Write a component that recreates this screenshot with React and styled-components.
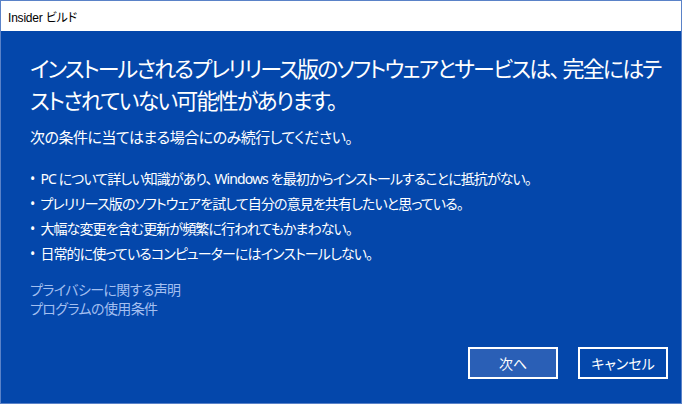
import React from "react";
import styled, { createGlobalStyle } from "styled-components";

const GlobalStyle = createGlobalStyle`
  html, body {
    margin: 0;
    padding: 0;
    background: #ffffff;
  }
  body {
    font-family: "Noto Sans", "Noto Sans CJK JP", sans-serif;
  }
`;

const Window = styled.div`
  width: 682px;
  height: 404px;
  box-sizing: border-box;
  border: 1px solid #5a82c8;
  display: flex;
  flex-direction: column;
  background: #0447ab;
  font-feature-settings: "palt";
`;

const TitleBar = styled.div`
  height: 30px;
  flex: none;
  background: #ffffff;
  color: #000000;
  font-family: "Liberation Sans", "Noto Sans CJK JP", sans-serif;
  font-size: 12px;
  letter-spacing: -0.2px;
  display: flex;
  align-items: center;
  padding-left: 7px;
`;

const Body = styled.div`
  flex: 1;
  display: flex;
  flex-direction: column;
  padding: 21px 13px 24px 29px;
  color: #ffffff;
`;

const Heading = styled.h1`
  margin: 0;
  font-size: 22px;
  font-weight: 400;
  line-height: 32px;
  letter-spacing: -1.85px;
`;

const Lead = styled.p`
  margin: 11px 0 0;
  font-size: 15px;
  line-height: 20px;
  letter-spacing: -0.5px;
`;

const BulletList = styled.ul`
  list-style: none;
  margin: 19px 0 0;
  padding: 0;
`;

const Bullet = styled.li`
  font-size: 14px;
  line-height: 25px;
  letter-spacing: -0.9px;
  &::before {
    content: "•";
    margin-right: 6px;
  }
`;

const Links = styled.div`
  margin-top: 14px;
  display: flex;
  flex-direction: column;
`;

const TextLink = styled.a`
  color: #a3bff0;
  font-size: 14px;
  line-height: 19px;
  letter-spacing: -0.6px;
  text-decoration: none;
  cursor: pointer;
`;

const Footer = styled.div`
  margin-top: auto;
  display: flex;
  justify-content: flex-end;
  gap: 20px;
`;

const Button = styled.button`
  width: 90px;
  height: 32px;
  box-sizing: border-box;
  border: 2px solid #ffffff;
  background: ${(p) => (p.primary ? "#2a5fb6" : "transparent")};
  color: #ffffff;
  font-family: inherit;
  font-size: 14px;
  font-feature-settings: "palt";
  cursor: pointer;
`;

const bullets = [
  "PC について詳しい知識があり、 Windows を最初からインストールすることに抵抗がない。",
  "プレリリース版のソフトウェアを試して自分の意見を共有したいと思っている。",
  "大幅な変更を含む更新が頻繁に行われてもかまわない。",
  "日常的に使っているコンピューターにはインストールしない。",
];

export default function App() {
  return (
    <>
      <GlobalStyle />
      <Window>
        <TitleBar>Insider ビルド</TitleBar>
        <Body>
          <Heading>
            インストールされるプレリリース版のソフトウェアとサービスは、
            完全にはテストされていない可能性があります。
          </Heading>
          <Lead>次の条件に当てはまる場合にのみ続行してください。</Lead>
          <BulletList>
            {bullets.map((b) => (
              <Bullet key={b}>{b}</Bullet>
            ))}
          </BulletList>
          <Links>
            <TextLink>プライバシーに関する声明</TextLink>
            <TextLink>プログラムの使用条件</TextLink>
          </Links>
          <Footer>
            <Button primary>次へ</Button>
            <Button>キャンセル</Button>
          </Footer>
        </Body>
      </Window>
    </>
  );
}
